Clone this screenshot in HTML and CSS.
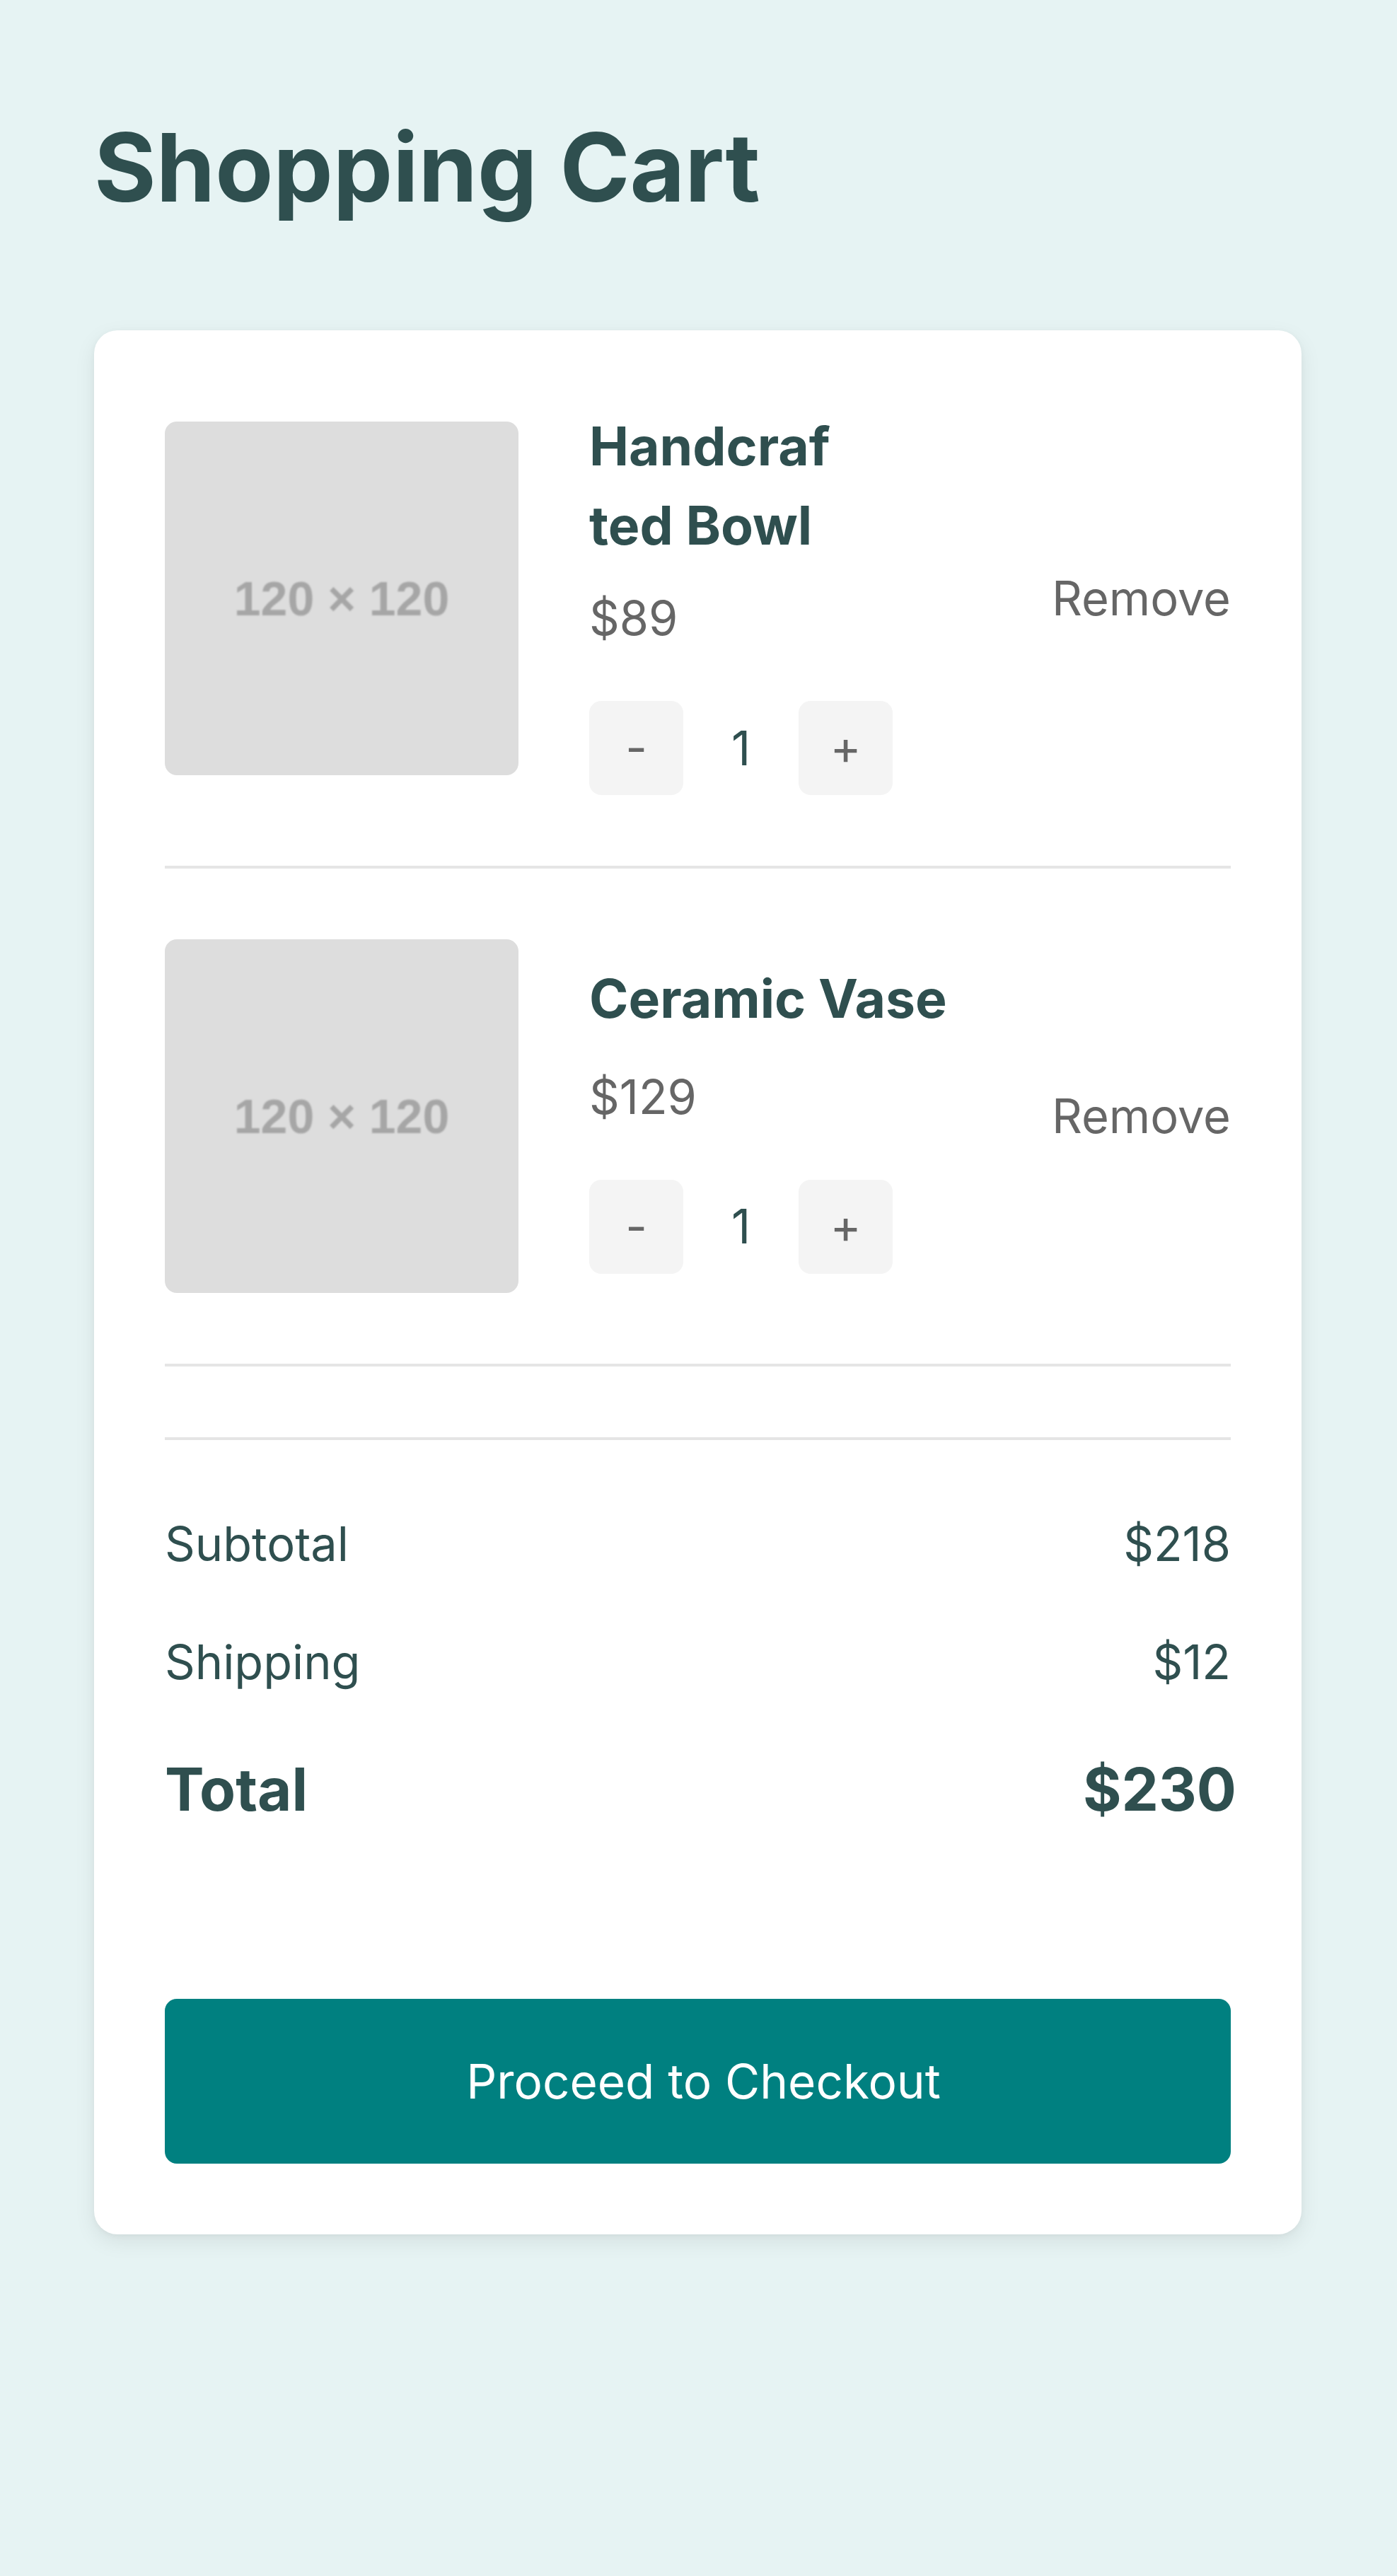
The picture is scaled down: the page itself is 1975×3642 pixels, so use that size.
FILE: index.html
```html
<!DOCTYPE html>
<html lang="en">
<head>
<meta charset="utf-8">
<title>Shopping Cart</title>
<link rel="stylesheet" href="styles.css">
</head>
<body>
<main class="page">
  <h1 class="page-title">Shopping Cart</h1>
  <section class="cart">
    <div class="cart-item">
      <div class="thumb"><span class="thumb-label">120 × 120</span></div>
      <div class="details">
        <h2 class="item-name item-name--narrow">Handcrafted Bowl</h2>
        <p class="price">$89</p>
        <div class="qty">
          <button class="qty-btn">-</button>
          <span class="qty-value">1</span>
          <button class="qty-btn">+</button>
        </div>
      </div>
      <button class="remove">Remove</button>
    </div>
    <div class="cart-item">
      <div class="thumb"><span class="thumb-label">120 × 120</span></div>
      <div class="details">
        <h2 class="item-name">Ceramic Vase</h2>
        <p class="price">$129</p>
        <div class="qty">
          <button class="qty-btn">-</button>
          <span class="qty-value">1</span>
          <button class="qty-btn">+</button>
        </div>
      </div>
      <button class="remove">Remove</button>
    </div>
    <div class="summary">
      <div class="summary-row"><span>Subtotal</span><span>$218</span></div>
      <div class="summary-row"><span>Shipping</span><span>$12</span></div>
      <div class="summary-row summary-total"><span>Total</span><span class="summary-total-value">$230</span></div>
    </div>
    <button class="checkout">Proceed to Checkout</button>
  </section>
</main>
</body>
</html>
```
FILE: styles.css
```css
* { box-sizing: border-box; }

html, body {
  margin: 0;
  padding: 0;
  background: #e6f3f3;
}

body {
  font-family: "Inter", "Noto Sans", "Liberation Sans", sans-serif;
  color: #2f4f4f;
  min-height: 3642px;
}

.page {
  padding: 0 135px 0 133px;
}

.page-title {
  margin: 156px 0 0;
  font-size: 134px;
  line-height: 160px;
  font-weight: 700;
  color: #2f4f4f;
}

.cart {
  margin-top: 151px;
  background: #ffffff;
  border-radius: 33px;
  padding: 100px;
  box-shadow: 0 10px 30px rgba(0, 0, 0, 0.08), 0 2px 8px rgba(0, 0, 0, 0.04);
}

.cart-item {
  display: flex;
  align-items: center;
  gap: 100px;
  padding: 100px 0;
  border-bottom: 4px solid #e5e5e5;
}

.cart-item:first-child {
  padding-top: 0;
}

.thumb {
  flex: 0 0 500px;
  width: 500px;
  height: 500px;
  border-radius: 17px;
  background: #dddddd;
  display: flex;
  align-items: center;
  justify-content: center;
}

.thumb-label {
  font-family: "Liberation Sans", Arial, sans-serif;
  font-weight: 700;
  font-size: 68px;
  color: #a6a6a6;
  filter: blur(0.9px);
}

.details {
  flex: 1 1 auto;
  min-width: 0;
}

.item-name {
  margin: 0 0 33px;
  font-size: 75px;
  line-height: 112px;
  font-weight: 700;
  color: #2f4f4f;
}

.item-name--narrow {
  max-width: 350px;
  overflow-wrap: anywhere;
  margin-top: 8px;
  margin-bottom: 25px;
}

.price {
  margin: 0 0 67px;
  font-size: 66.7px;
  line-height: 100px;
  color: #666666;
}

.qty {
  display: flex;
  align-items: center;
  gap: 50px;
}

.qty-btn {
  width: 133px;
  height: 133px;
  border: none;
  border-radius: 17px;
  background: #f4f4f4;
  color: #666666;
  font-family: inherit;
  font-size: 66.7px;
  line-height: 1;
  padding: 0;
}

.qty-value {
  min-width: 63px;
  text-align: center;
  font-size: 66.7px;
  line-height: 100px;
  color: #2f4f4f;
}

.remove {
  flex: 0 0 auto;
  margin-left: auto;
  border: none;
  background: none;
  padding: 0;
  font-family: inherit;
  font-size: 66.7px;
  line-height: 100px;
  color: #666666;
}

.summary {
  margin-top: 100px;
  border-top: 4px solid #e5e5e5;
  padding: 97px 0 100px;
}

.summary-row {
  display: flex;
  justify-content: space-between;
  font-size: 66.7px;
  line-height: 100px;
  margin-bottom: 67px;
  color: #2f4f4f;
}

.summary-total {
  font-size: 83.3px;
  line-height: 125px;
  font-weight: 700;
}

.summary-total-value {
  margin-right: -8px;
}

.checkout {
  display: block;
  width: 100%;
  height: 233px;
  margin-top: 67px;
  padding: 0 0 0 16px;
  border: none;
  border-radius: 17px;
  background: #008080;
  color: #ffffff;
  font-family: inherit;
  font-size: 67.4px;
  line-height: 1;
}
```
